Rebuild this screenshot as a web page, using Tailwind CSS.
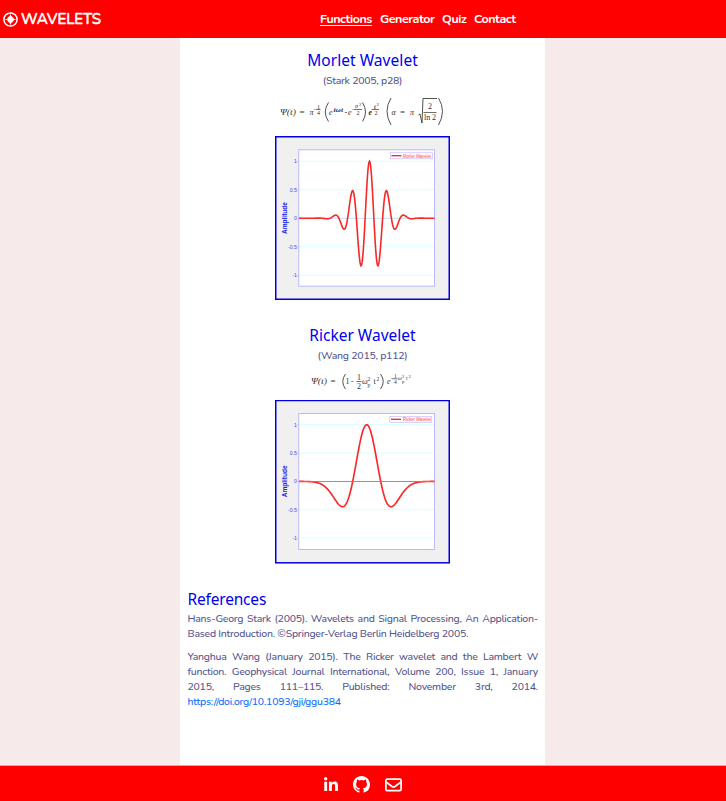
<!DOCTYPE html>
<html lang="en">
<head>
<meta charset="utf-8">
<title>Wavelets</title>
<script src="https://cdn.jsdelivr.net/npm/@tailwindcss/browser@4"></script>
</head>
<body class="w-full h-[801px] flex flex-col bg-[#f7eaea] font-['Nunito','Lato',sans-serif] text-[#56568f] overflow-hidden">
<header class="h-[38px] shrink-0 bg-[#ff0000] text-white flex items-center">
  <div class="w-[320px] pl-[3px] flex items-center gap-[3px]">
    <svg class="w-[15px] h-[15px]" viewBox="0 0 15 15" fill="none" stroke="#fff"><circle cx="7.500" cy="7.500" r="6.600" stroke-width="1.500"/><path d="M7.500 2.500v10M2.500 7.500h10" stroke-width="1"/><path d="M7.500 3c.8 1.200 3.600 2.600 3.600 4.500s-2.800 3.300-3.600 4.500c-.8-1.200-3.600-2.600-3.600-4.500s2.800-3.300 3.600-4.500z" fill="#fff" stroke="none"/></svg>
    <svg class="w-[84px] h-[24px] overflow-visible" viewBox="0 0 84 24" fill="#fff"><text x="0" y="17" textLength="80" lengthAdjust="spacingAndGlyphs" font-size="15.500" stroke="#fff" stroke-width=".6">WAVELETS</text></svg>
  </div>
  <nav class="flex text-[12.5px] leading-[16px] font-bold">
    <a class="w-[60px] underline underline-offset-2 tracking-[-0.46px]">Functions</a>
    <a class="w-[62px] tracking-[-0.47px]">Generator</a>
    <a class="w-[32px] tracking-[-0.4px]">Quiz</a>
    <a class="tracking-[-0.5px]">Contact</a>
  </nav>
</header>
<main class="w-[365px] flex-1 ml-[180px] bg-white px-[7px] pt-[12px] flex flex-col">
  <section class="h-[275px] flex flex-col items-center">
    <h2 class="h-[21px] leading-[21px] text-[15.5px] text-[#0000ee] font-['Noto_Sans']"><span class="tracking-[0.05px]">Morlet Wavelet</span></h2>
    <p class="h-[19px] leading-[20px] text-[10.5px] font-medium tracking-[-0.25px]">(Stark 2005, p28)</p>
    <svg class="w-[175px] h-[46px] shrink-0" viewBox="275 90 175 46" font-family="Liberation Serif" fill="#333">
      <g font-size="8"><text x="280" y="115" textLength="16" lengthAdjust="spacingAndGlyphs" font-style="italic">Ψ(t)</text><text x="299.500" y="115" font-size="9">=</text><text x="309.500" y="115" font-style="italic">π</text><text x="329" y="115" font-style="italic">e</text><text x="344.500" y="115">-</text><text x="348" y="115" font-style="italic">e</text><text x="368.500" y="115" font-style="italic" font-weight="bold">e</text><text x="391.500" y="115" font-style="italic">α</text><text x="400" y="115" font-size="9">=</text><text x="410" y="115" font-style="italic">π</text><text x="428" y="109">2</text><text x="424" y="120" textLength="12">ln 2</text></g>
      <g font-size="6"><text x="313.500" y="111">-</text><text x="317" y="108.500">1</text><text x="317" y="114.500">4</text><text x="333.500" y="112" font-style="italic" font-weight="bold" textLength="9.500" lengthAdjust="spacingAndGlyphs">iωt</text><text x="352" y="111">-</text><text x="355" y="108.300" font-style="italic">σ</text><text x="359" y="106" font-size="5">2</text><text x="356.500" y="114.500">2</text><text x="374" y="108.500" font-style="italic" font-weight="bold">t</text><text x="376.500" y="106" font-size="5">2</text><text x="374.500" y="114.500">2</text></g>
      <path d="M316 109.500h4.500M354 109.500h8M371.500 109.500h7.500M423.500 112.500h13" stroke="#333" stroke-width=".7"/>
      <path d="M328.500 102.500q-6.500 9.500 0 19M362.500 102.500q6 9.500 0 19M391 98q-8 13 0 27M438.500 98q8 13 0 27M418.500 115l1.500-1 2 9 1-24.500h14" stroke="#333" stroke-width=".85" fill="none"/>
    </svg>
    <svg class="w-[175px] h-[164px] shrink-0" viewBox="275 136 175 164" font-family="Liberation Sans">
      <rect x="275.750" y="136.750" width="173.500" height="162.500" fill="#f0f0f0" stroke="#0000e6" stroke-width="1.500"/>
      <rect x="298.800" y="149.800" width="135.700" height="136.400" fill="#fff" stroke="#b3b3fa" stroke-width=".9"/>
      <path d="M299 161.300h135M299 189.700h135M299 246.700h135M299 275.300h135" stroke="#d7ffff" stroke-width="1"/>
      <path d="M299 218.300h135" stroke="#c2e0f2" stroke-width="1"/>
      <path d="M297 161.300h2M297 189.700h2M297 218.300h2M297 246.700h2M297 275.300h2" stroke="#b3b3fa" stroke-width=".7"/>
      <path id="morlet" fill="none" stroke="#fa2828" stroke-width="1.600"/>
      <g font-size="5.200" fill="#4c4cf5" text-anchor="end"><text x="297" y="163.200">1</text><text x="297" y="191.600">0.5</text><text x="297" y="220.100">0</text><text x="297" y="248.500">-0.5</text><text x="297" y="277.100">-1</text></g>
      <text transform="translate(286.500 218) rotate(-90)" text-anchor="middle" font-size="6.600" font-weight="bold" fill="#2020ee" textLength="32" lengthAdjust="spacingAndGlyphs">Amplitude</text>
      <rect x="390.500" y="152.800" width="42" height="6" fill="#fff" stroke="#c7b9fa" stroke-width=".7"/><path d="M391.500 155.700h10" stroke="#ff2020" stroke-width="1.300"/><text x="403" y="157.500" font-size="4.800" fill="#ff4040" textLength="28" lengthAdjust="spacingAndGlyphs">Morlet Wavelet</text>
    </svg>
  </section>
  <section class="h-[264px] flex flex-col items-center">
    <h2 class="h-[21px] leading-[21px] text-[15.5px] text-[#0000ee] font-['Noto_Sans']"><span>Ricker Wavelet</span></h2>
    <p class="h-[19px] leading-[20px] text-[10.5px] font-medium tracking-[-0.25px]">(Wang 2015, p112)</p>
    <svg class="w-[175px] h-[35px] shrink-0" viewBox="275 365 175 35" font-family="Liberation Serif" fill="#333">
      <g font-size="8"><text x="311" y="384" textLength="16" lengthAdjust="spacingAndGlyphs" font-style="italic">Ψ(t)</text><text x="330.500" y="384" font-size="9">=</text><text x="345.500" y="384">1</text><text x="351" y="384">-</text><text x="357" y="380">1</text><text x="357" y="389">2</text><text x="362" y="384" font-style="italic">ω</text><text x="373.500" y="384">t</text><text x="387" y="384" font-style="italic">e</text></g>
      <g font-size="5.500"><text x="367.500" y="381">2</text><text x="367.500" y="387">p</text><text x="376.500" y="381">2</text><text x="391" y="380">-</text><text x="394" y="377.500">1</text><text x="394" y="383.500">4</text><text x="398" y="380" font-style="italic">ω</text><text x="402" y="378" font-size="4.500">2</text><text x="402" y="383" font-size="4.500">p</text><text x="406" y="380">t</text><text x="408.500" y="378" font-size="4.500">2</text></g>
      <path d="M356.500 381.500h5M392.500 378.800h5" stroke="#333" stroke-width=".7"/><path d="M345.500 374q-5.500 7.500 0 15M380.500 374q5.500 7.500 0 15" stroke="#333" stroke-width=".85" fill="none"/>
    </svg>
    <svg class="w-[175px] h-[164px] shrink-0" viewBox="275 400 175 164" font-family="Liberation Sans">
      <rect x="275.750" y="400.500" width="173.500" height="162.300" fill="#f0f0f0" stroke="#0000e6" stroke-width="1.500"/>
      <rect x="298.800" y="413.500" width="135.700" height="136" fill="#fff" stroke="#b3b3fa" stroke-width=".9"/>
      <path d="M299 424.700h135M299 453h135M299 509.700h135M299 538h135" stroke="#d7ffff" stroke-width="1"/>
      <path d="M297 424.700h2M297 453h2M297 481.500h2M297 509.700h2M297 538h2" stroke="#b3b3fa" stroke-width=".7"/>
      <path id="ricker" fill="none" stroke="#fa2828" stroke-width="1.650"/>
      <path d="M299 481.500h135" stroke="#4f9e9e" stroke-width=".9"/>
      <g font-size="5.200" fill="#4c4cf5" text-anchor="end"><text x="297" y="426.600">1</text><text x="297" y="454.900">0.5</text><text x="297" y="483.300">0</text><text x="297" y="511.500">-0.5</text><text x="297" y="539.900">-1</text></g>
      <text transform="translate(286.500 481.300) rotate(-90)" text-anchor="middle" font-size="6.600" font-weight="bold" fill="#2020ee" textLength="32" lengthAdjust="spacingAndGlyphs">Amplitude</text>
      <rect x="389.800" y="416.300" width="42" height="6" fill="#fff" stroke="#c7b9fa" stroke-width=".7"/><path d="M391 419.300h10" stroke="#ff2020" stroke-width="1.300"/><text x="403" y="421" font-size="4.800" fill="#ff4040" textLength="28" lengthAdjust="spacingAndGlyphs">Ricker Wavelet</text>
    </svg>
  </section>
  <section class="text-[10.5px] leading-[15px] font-medium pl-[0.5px] pt-px">
    <h2 class="h-[21px] leading-[19px] text-[15.5px] text-[#0000ee] font-normal font-['Noto_Sans'] tracking-[-0.18px]">References</h2>
    <p class="mb-[8px] text-justify tracking-[-0.25px]">Hans-Georg Stark (2005). Wavelets and Signal Processing, An Application-Based Introduction. ©Springer-Verlag Berlin Heidelberg 2005.</p>
    <p class="text-justify tracking-[-0.25px]">Yanghua Wang (January 2015). The Ricker wavelet and the Lambert W function. Geophysical Journal International, Volume 200, Issue 1, January 2015, Pages 111–115. Published: November 3rd, 2014. <a class="text-[#0d6efd]">https://doi.org/10.1093/gji/ggu384</a></p>
  </section>
</main>
<footer class="h-[36px] shrink-0 bg-[#ff0000] border-t border-[#ff9999] flex items-center text-white pl-[323px] gap-[14px] pt-[2px]">
  <svg class="w-[16px] h-[16px]" viewBox="0 0 448 512" fill="currentColor"><path d="M100.280 448H7.400V148.900h92.880zM53.790 108.100C24.090 108.100 0 83.500 0 53.800a53.790 53.790 0 0 1 107.580 0c0 29.700-24.100 54.300-53.790 54.300zM447.900 448h-92.680V302.400c0-34.700-.7-79.200-48.290-79.200-48.290 0-55.690 37.700-55.690 76.700V448h-92.780V148.900h89.080v40.800h1.300c12.400-23.500 42.690-48.300 87.880-48.300 94 0 111.280 61.900 111.280 142.300V448z"/></svg>
  <svg class="w-[17px] h-[17px]" viewBox="0 0 16 16" fill="currentColor"><path d="M8 0C3.580 0 0 3.580 0 8c0 3.540 2.290 6.530 5.470 7.590.4.070.55-.17.55-.38 0-.19-.01-.82-.01-1.490-2.010.37-2.530-.49-2.690-.94-.09-.23-.48-.94-.82-1.130-.28-.15-.68-.52-.01-.53.63-.01 1.080.58 1.230.82.72 1.210 1.870.87 2.330.66.07-.52.28-.87.51-1.070-1.780-.2-3.640-.89-3.640-3.950 0-.87.31-1.590.82-2.150-.08-.2-.36-1.020.08-2.120 0 0 .67-.21 2.200.82a7.640 7.640 0 0 1 4 0c1.530-1.040 2.200-.82 2.200-.82.44 1.100.16 1.920.08 2.120.51.56.82 1.270.82 2.150 0 3.070-1.870 3.750-3.650 3.950.29.25.54.73.54 1.480 0 1.070-.01 1.930-.01 2.200 0 .21.15.46.55.38A8.010 8.010 0 0 0 16 8c0-4.420-3.580-8-8-8z"/></svg>
  <svg class="w-[17px] h-[14px] ml-px" viewBox="0 0 17 14" fill="none" stroke="currentColor" stroke-width="1.700"><rect x=".9" y="1.200" width="15.200" height="11.400" rx="1.200"/><path d="M1 4l6 4.500q1.500 1 3 0L16 4"/></svg>
</footer>
<script>
function plot(id, cx, zero, unit, f) {
  let d = '';
  for (let x = 299; x <= 434.500; x += 0.5) d += (d ? 'L' : 'M') + x + ' ' + (zero - unit * f(x - cx)).toFixed(2);
  document.getElementById(id).setAttribute('d', d);
}
plot('morlet', 369.500, 218.200, 57, t => Math.cos(2 * Math.PI * t / 17.500) * Math.exp(-t * t / 405.600));
plot('ricker', 366.700, 481.400, 56.700, t => (1 - t * t / 196) * Math.exp(-t * t / 392));
</script>
</body>
</html>
